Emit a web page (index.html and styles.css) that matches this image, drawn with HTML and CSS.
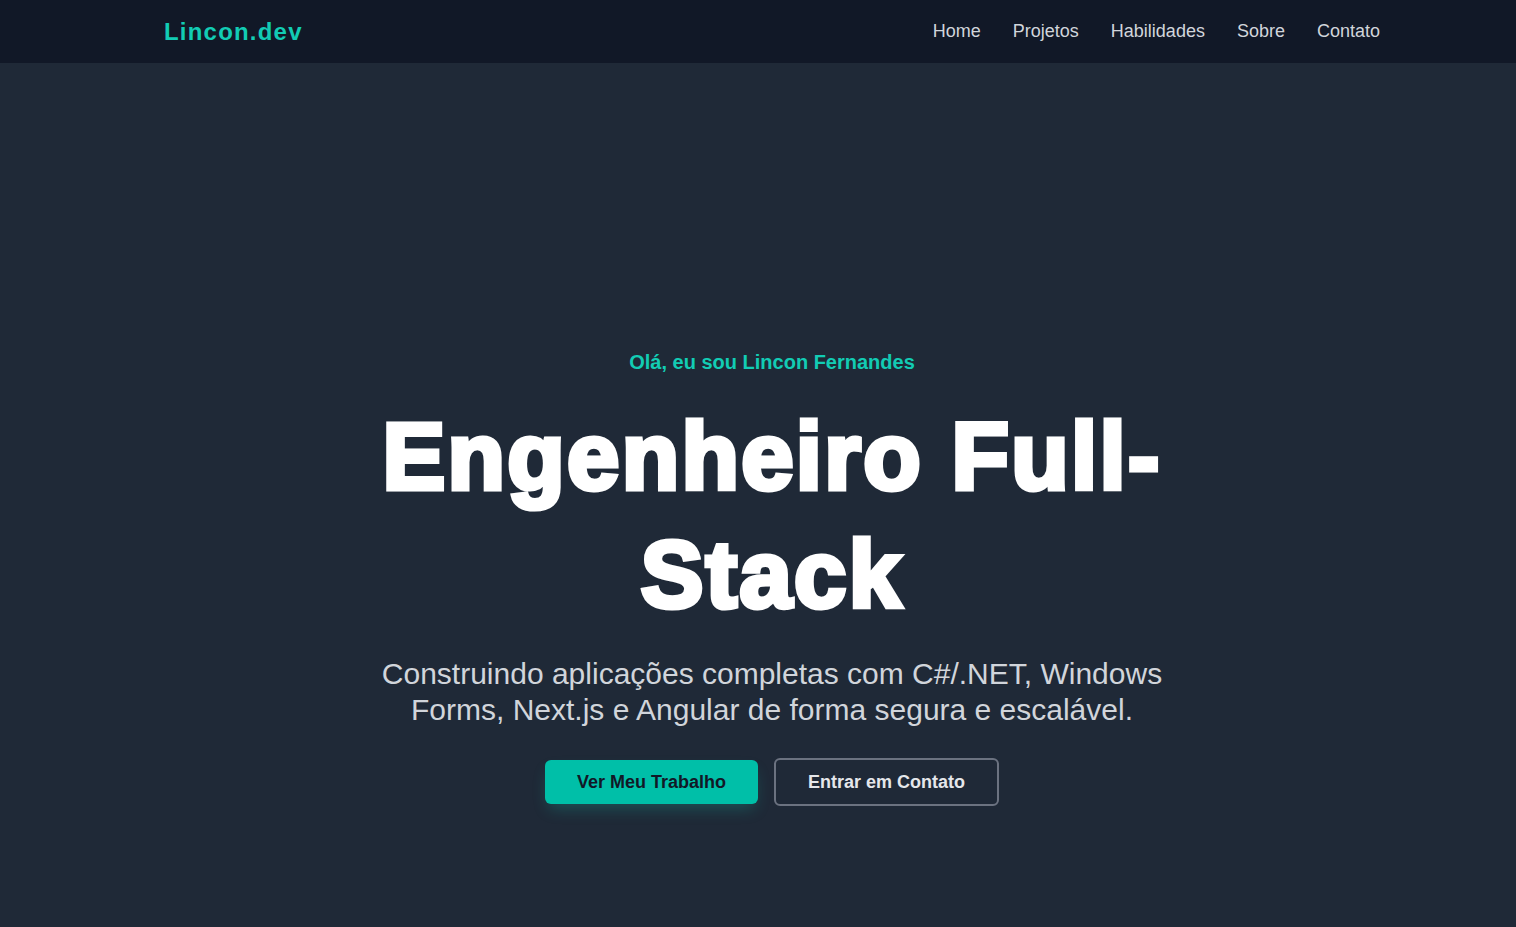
FILE: index.html
```html
<!DOCTYPE html>
<html lang="pt-BR">
<head>
<meta charset="utf-8">
<title>Lincon.dev</title>
<link rel="stylesheet" href="styles.css">
</head>
<body>
<div class="page">
  <header class="navbar">
    <div class="nav-inner">
      <a class="logo" href="#">Lincon.dev</a>
      <nav class="nav-links">
        <a href="#">Home</a>
        <a href="#">Projetos</a>
        <a href="#">Habilidades</a>
        <a href="#">Sobre</a>
        <a href="#">Contato</a>
      </nav>
    </div>
  </header>
  <main class="hero">
    <div class="hero-inner">
      <p class="greeting">Olá, eu sou Lincon Fernandes</p>
      <h1 class="title">Engenheiro Full-Stack</h1>
      <p class="subtitle">Construindo aplicações completas com C#/.NET, Windows Forms, Next.js e Angular de forma segura e escalável.</p>
      <div class="actions">
        <a class="btn btn-primary" href="#">Ver Meu Trabalho</a>
        <a class="btn btn-outline" href="#">Entrar em Contato</a>
      </div>
    </div>
  </main>
</div>
</body>
</html>
```
FILE: styles.css
```css
* { box-sizing: border-box; }
html, body { margin: 0; padding: 0; }
body {
  background: #1f2937;
  font-family: "Liberation Sans", Arial, sans-serif;
  color: #e5e7eb;
  overflow: hidden;
  height: 927px;
}
a { text-decoration: none; color: inherit; }
.page { width: 1544px; }
.navbar {
  background: #111827;
  height: 63px;
}
.nav-inner {
  width: 1216px;
  margin: 0 auto;
  height: 63px;
  display: flex;
  align-items: center;
  justify-content: space-between;
}
.logo {
  font-size: 24px;
  font-weight: 700;
  letter-spacing: 0.05em;
  color: #12ccb4;
}
.nav-links {
  display: flex;
  gap: 32px;
  font-size: 18px;
  color: #d1d5db;
}
.hero {
  padding-top: 285px;
}
.hero-inner {
  width: 896px;
  margin: 0 auto;
  display: flex;
  flex-direction: column;
  align-items: center;
  text-align: center;
}
.greeting {
  margin: 0;
  font-size: 20px;
  line-height: 28px;
  font-weight: 700;
  color: #12ccb4;
}
.title {
  margin: 22px 0 0;
  font-size: 94px;
  line-height: 118px;
  font-weight: 900;
  color: #ffffff;
  letter-spacing: 0.025em;
  -webkit-text-stroke: 5px #ffffff;
}
.subtitle {
  margin: 22px 0 0;
  width: 800px;
  font-size: 30px;
  line-height: 36px;
  color: #d1d5db;
}
.actions {
  margin-top: 30px;
  display: flex;
  gap: 16px;
  align-items: center;
}
.btn {
  font-size: 18px;
  line-height: 28px;
  font-weight: 700;
  padding: 8px 32px;
  border-radius: 6px;
}
.btn-primary {
  background: #00bfa8;
  color: #111827;
  box-shadow: 0 8px 16px -4px rgba(20, 184, 166, 0.3);
}
.btn-outline {
  border: 2px solid #6b7280;
  color: #e5e7eb;
}
```
